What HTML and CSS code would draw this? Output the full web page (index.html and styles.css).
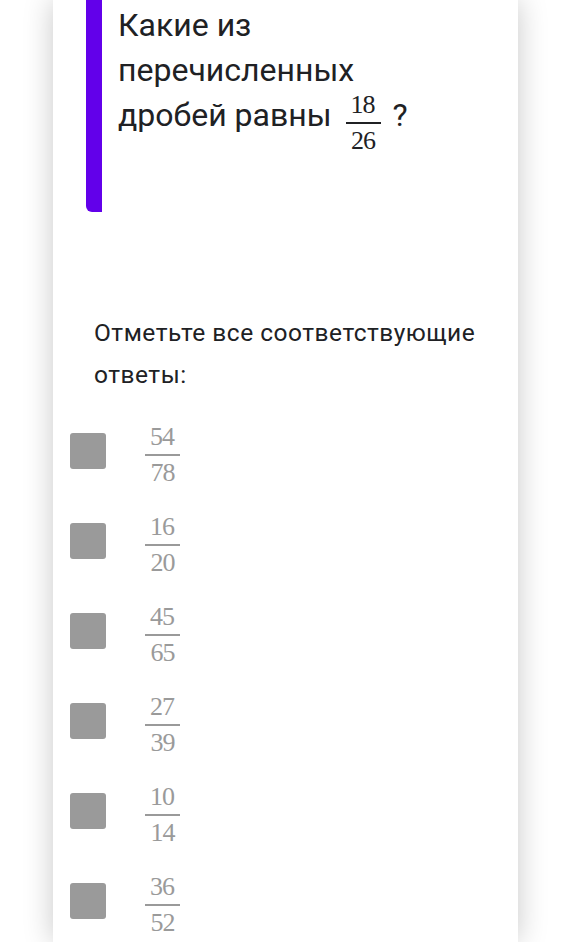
FILE: index.html
```html
<!DOCTYPE html>
<html>
<head>
    <title>Вопрос</title>
    <link rel="stylesheet" href="styles.css">
</head>
<body>
    <div class="card">
        <div class="question">
            <div class="accent"></div>
            <div class="question-text">
                Какие из перечисленных дробей равны
                <span class="frac"><span class="num">18</span><span class="den">26</span></span>
                ?
            </div>
        </div>

        <div class="hint">Отметьте все соответствующие ответы:</div>

        <div class="options">
            <div class="option">
                <div class="box"></div>
                <span class="frac muted"><span class="num">54</span><span class="den">78</span></span>
            </div>
            <div class="option">
                <div class="box"></div>
                <span class="frac muted"><span class="num">16</span><span class="den">20</span></span>
            </div>
            <div class="option">
                <div class="box"></div>
                <span class="frac muted"><span class="num">45</span><span class="den">65</span></span>
            </div>
            <div class="option">
                <div class="box"></div>
                <span class="frac muted"><span class="num">27</span><span class="den">39</span></span>
            </div>
            <div class="option">
                <div class="box"></div>
                <span class="frac muted"><span class="num">10</span><span class="den">14</span></span>
            </div>
            <div class="option">
                <div class="box"></div>
                <span class="frac muted"><span class="num">36</span><span class="den">52</span></span>
            </div>
        </div>
    </div>
</body>
</html>
```

FILE: styles.css
```css
* {
    margin: 0;
    padding: 0;
    box-sizing: border-box;
}

body {
    background: #fff;
    font-family: Roboto, "Noto Sans", sans-serif;
    color: #202124;
    overflow: hidden;
}

.card {
    background: #fff;
    width: 465px;
    height: 942px;
    margin-left: 53px;
    box-shadow: 0 0 28px rgba(0, 0, 0, 0.22);
}

.question {
    display: flex;
    gap: 16px;
    padding-left: 33px;
}

.accent {
    width: 16px;
    height: 212px;
    background: #6200ea;
    border-bottom-left-radius: 6px;
    flex-shrink: 0;
}

.question-text {
    width: 340px;
    font-size: 32px;
    line-height: 45px;
    padding-top: 3px;
}

.frac {
    display: inline-flex;
    flex-direction: column;
    align-items: center;
    vertical-align: middle;
    font-family: "Liberation Serif", serif;
    font-size: 26px;
    line-height: 26px;
    letter-spacing: -1px;
    margin: -1px 4px -12px 6px;
}

.frac .num {
    padding: 0 6px 4px 5px;
    border-bottom: 2px solid currentColor;
}

.frac .den {
    padding: 4px 0 0;
}

.hint {
    padding: 100px 30px 0 41px;
    font-size: 24.5px;
    line-height: 42px;
    letter-spacing: 0.5px;
}

.options {
    padding: 31px 0 0 17px;
    display: flex;
    flex-direction: column;
    gap: 42px;
}

.option {
    display: flex;
    align-items: center;
    gap: 39px;
    height: 48px;
}

.box {
    width: 36px;
    height: 36px;
    background: #9a9a9a;
    border-radius: 3px;
    flex-shrink: 0;
}

.muted {
    color: #9a9a9a;
    margin: 8px 0 0;
}
```
